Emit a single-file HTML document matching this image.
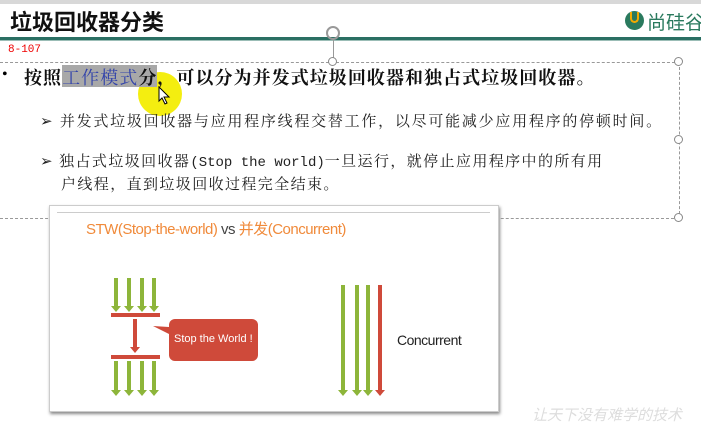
<!DOCTYPE html>
<html><head><meta charset="utf-8"><style>
body{margin:0;width:701px;height:420px;overflow:hidden;background:#fff;position:relative;font-family:"Liberation Serif","Noto Serif CJK SC",serif}
.a{position:absolute;white-space:nowrap}
.h{position:absolute;width:7px;height:7px;border:1.5px solid #888;border-radius:50%;background:#fff}
.m{font-family:"Liberation Mono",monospace;letter-spacing:0;font-size:14px}
</style></head><body>
<div class="a" style="left:0;top:0;width:701px;height:4px;background:#d8d8d8"></div>
<div class="a" style="left:10px;top:5px;font:bold 22px 'Liberation Sans','Noto Sans CJK SC',sans-serif;color:#111">垃圾回收器分类</div>
<div class="a" style="left:625px;top:11px;width:19px;height:19px;border-radius:50%;background:#2a7a5e"></div>
<div class="a" style="left:630px;top:12px;width:5px;height:9px;border:2px solid #f2a900;border-top:none;border-radius:0 0 5px 5px"></div>
<div class="a" style="left:647px;top:8px;font:19px 'Noto Sans CJK SC',sans-serif;color:#2a7a5e">尚硅谷</div>
<div class="a" style="left:0;top:37px;width:701px;height:3px;background:#2a6f63"></div>
<div class="a" style="left:0;top:40px;width:701px;height:1px;background:#9bbdb6"></div>
<div class="a" style="left:8px;top:44px;font:11px 'Liberation Mono',monospace;color:#e00">8-107</div>
<div class="a" style="left:0;top:62px;width:679px;height:156px;border-top:1px dashed #999;border-right:1px dashed #999"></div>
<div class="a" style="left:0;top:218px;width:679px;border-top:1px dashed #999"></div>
<div class="a" style="left:333px;top:38px;width:1px;height:24px;background:#999"></div>
<div class="a" style="left:326px;top:26px;width:10px;height:10px;border:2px solid #999;border-radius:50%"></div>
<div class="h" style="left:328px;top:57px"></div><div class="h" style="left:674px;top:57px"></div>
<div class="h" style="left:674px;top:135px"></div><div class="h" style="left:674px;top:213px"></div>
<div class="h" style="left:328px;top:213px"></div>
<div class="a" style="left:138px;top:72px;width:44px;height:44px;border-radius:50%;background:#f4ee10"></div>
<div class="a" style="left:2px;top:66px;font-size:16px">•</div>
<div class="a" style="left:62px;top:65px;width:95px;height:22px;background:#a8a8a8"></div>
<div class="a" style="left:24px;top:64px;font-size:18px;font-weight:bold;letter-spacing:1.05px;color:#111">按照<span style="color:#3344aa;font-weight:normal">工作模式</span>分，可以分为并发式垃圾回收器和独占式垃圾回收器。</div>
<svg class="a" style="left:158px;top:86px" width="14" height="20"><path d="M1 1 L1 15 L4 12 L7 18 L9 17 L6 11 L11 11 Z" fill="#fff" stroke="#000"/></svg>
<div class="a" style="left:40px;top:111px;font-size:15px;line-height:22px;color:#222;letter-spacing:1.75px">➢ 并发式垃圾回收器与应用程序线程交替工作，以尽可能减少应用程序的停顿时间。</div>
<div class="a" style="left:40px;top:151px;font-size:15px;line-height:22px;color:#222;letter-spacing:1.4px">➢ 独占式垃圾回收器<span class="m">(Stop the world)</span>一旦运行，就停止应用程序中的所有用<br><span style="margin-left:21px">户线程，直到垃圾回收过程完全结束。</span></div>
<div class="a" style="left:49px;top:205px;width:448px;height:205px;background:#fff;border:1px solid #ccc;box-shadow:1px 2px 3px #888"></div>
<div class="a" style="left:57px;top:212px;width:433px;height:1px;background:#ccc"></div>
<div class="a" style="left:86px;top:218px;font:15px 'Liberation Sans','Noto Sans CJK SC',sans-serif;color:#f08a3a;letter-spacing:-0.5px">STW(Stop-the-world) <span style="color:#444">vs</span> 并发(Concurrent)</div>
<svg class="a" style="left:0;top:0" width="701" height="420">
<g fill="#8db53a">
<path d="M114 278h4v28h3l-5 6-5-6h3z"/><path d="M127 278h4v28h3l-5 6-5-6h3z"/><path d="M140 278h4v28h3l-5 6-5-6h3z"/><path d="M152 278h4v28h3l-5 6-5-6h3z"/>
<path d="M114 361h4v29h3l-5 6-5-6h3z"/><path d="M127 361h4v29h3l-5 6-5-6h3z"/><path d="M140 361h4v29h3l-5 6-5-6h3z"/><path d="M152 361h4v29h3l-5 6-5-6h3z"/>
<path d="M341 285h4v105h3l-5 6-5-6h3z"/><path d="M355 285h4v105h3l-5 6-5-6h3z"/><path d="M366 285h4v105h3l-5 6-5-6h3z"/>
</g>
<g fill="#cf4a3a">
<path d="M378 285h4v105h3l-5 6-5-6h3z"/>
<rect x="111" y="313" width="49" height="4"/><rect x="111" y="355" width="49" height="4"/>
<path d="M133 319h4v28h3l-5 6-5-6h3z"/>
<path d="M169 327 L153 326 L169 334 Z"/>
<rect x="169" y="319" width="89" height="42" rx="6"/>
</g>
</svg>
<div class="a" style="left:174px;top:333px;font:11px 'Liberation Sans',sans-serif;color:#fff">Stop the World !</div>
<div class="a" style="left:397px;top:332px;font:14px 'Liberation Sans',sans-serif;color:#222;letter-spacing:-0.5px">Concurrent</div>
<div class="a" style="left:532px;top:404px;font:italic 15px 'Noto Sans CJK SC',sans-serif;color:#ddd">让天下没有难学的技术</div>
</body></html>
